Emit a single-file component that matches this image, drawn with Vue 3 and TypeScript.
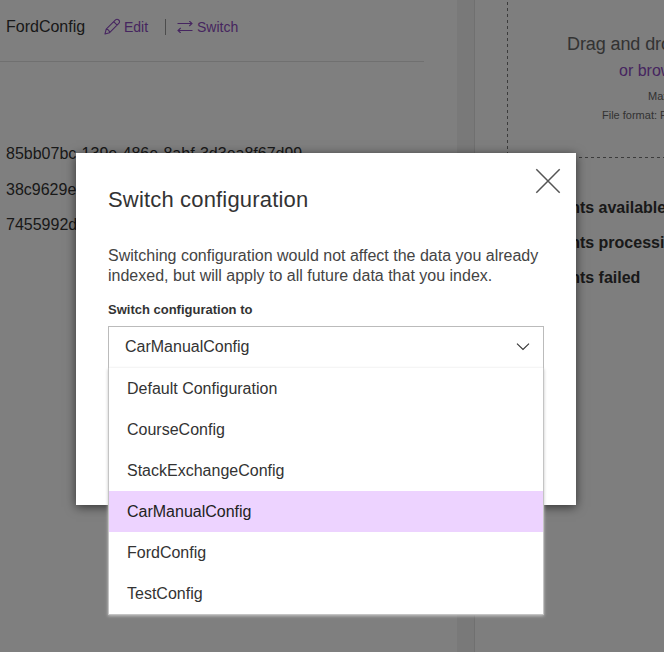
<script setup lang="ts">
import { ref } from 'vue'

const ids: string[] = ['85bb07bc-139e-486e-8abf-3d3ea8f67d99', '38c9629e', '7455992d']
const stats: string[] = ['Documents available', 'Documents processing', 'Documents failed']
const options: string[] = [
  'Default Configuration',
  'CourseConfig',
  'StackExchangeConfig',
  'CarManualConfig',
  'FordConfig',
  'TestConfig',
]
const selected = ref<string>('CarManualConfig')
</script>

<template>
  <div class="screen">
    <div class="page">
      <main class="left">
        <header class="head">
          <span class="name">FordConfig</span>
          <a class="action edit">
            <svg width="17" height="17" viewBox="0 0 17 17" fill="none" stroke="currentColor" stroke-width="1.1" stroke-linejoin="round">
              <path d="M1 16L2.2 11.2L11.5 1.9Q13 .5 14.7 2Q16.4 3.8 14.8 5.3L5.6 14.7ZM2.2 11.2Q5.2 11.4 5.6 14.7M9.7 3.7L13.1 7.1" />
            </svg>
            Edit
          </a>
          <span class="bar"></span>
          <a class="action switch">
            <svg width="16" height="12" viewBox="0 0 16 12" fill="none" stroke="currentColor" stroke-width="1.1">
              <path d="M.5 2.5H15M12.3 0L15 2.5L12.3 5M15.5 9.5H1M3.7 7L1 9.5L3.7 12" />
            </svg>
            Switch
          </a>
        </header>
        <ul class="ids">
          <li v-for="id in ids" :key="id">{{ id }}</li>
        </ul>
      </main>
      <aside class="right">
        <div class="drop">
          <p class="drag">Drag and drop</p>
          <p class="browse">or browse</p>
          <p class="small max">Max</p>
          <p class="small format">File format: PDF</p>
        </div>
        <ul class="stats">
          <li v-for="s in stats" :key="s">{{ s }}</li>
        </ul>
      </aside>
    </div>

    <div class="overlay">
      <section class="modal">
        <svg class="close" width="26" height="26" viewBox="0 0 26 26" fill="none" stroke="#555" stroke-width="1.5">
          <path d="M1.3 1.3L24.7 24.7M24.7 1.3L1.3 24.7" />
        </svg>
        <h2>Switch configuration</h2>
        <p class="text">
          Switching configuration would not affect the data you already<br />indexed, but will apply to all future data that you index.
        </p>
        <label>Switch configuration to</label>
        <div class="select">
          <span>{{ selected }}</span>
          <svg width="14" height="8" viewBox="0 0 14 8" fill="none" stroke="#333" stroke-width="1.1">
            <path d="M1 .7L7 6.5L13 .7" />
          </svg>
          <ul class="menu">
            <li v-for="o in options" :key="o" :class="{ active: o === selected }" @click="selected = o">{{ o }}</li>
          </ul>
        </div>
      </section>
    </div>
  </div>
</template>

<style>
body {
  margin: 0;
  overflow: hidden;
}
</style>

<style scoped>
* {
  box-sizing: border-box;
}
p,
ul,
h2 {
  margin: 0;
  padding: 0;
  list-style: none;
}
.screen {
  position: relative;
  width: 664px;
  height: 652px;
  overflow: hidden;
  font-family: 'Liberation Sans', Arial, sans-serif;
  font-size: 16px;
  color: #333;
}
.page {
  display: flex;
  height: 100%;
  gap: 17px;
  background: #f2f2f2;
}
.left {
  width: 457px;
  flex: none;
  background: #fff;
}
.head {
  display: flex;
  align-items: center;
  width: 424px;
  height: 62px;
  padding: 0 0 8px 6px;
  border-bottom: 1px solid #e0e0e0;
}
.name {
  width: 98px;
}
.action {
  display: flex;
  align-items: center;
  gap: 3px;
  font-size: 14px;
  color: #8d4bc0;
}
.edit {
  width: 61px;
}
.switch {
  gap: 4px;
}
.bar {
  width: 1px;
  height: 16px;
  margin-right: 11px;
  background: #999;
}
.ids {
  padding: 74px 0 0 6px;
}
.ids li {
  height: 35.5px;
  line-height: 35px;
}
.right {
  flex: none;
  width: 190px;
  border-left: 1px solid #e0e0e0;
  background: #fcfcfc;
  overflow: hidden;
  white-space: nowrap;
}
.drop {
  height: 158px;
  margin-left: 32px;
  padding: 31px 0 0 1px;
  background:
    repeating-linear-gradient(to bottom, transparent 0 2px, #777 2px 5px, transparent 5px 6px) left top / 1px 100% no-repeat,
    repeating-linear-gradient(to right, #777 0 3px, transparent 3px 6px) left bottom / 100% 1px no-repeat;
}
.drag {
  padding-left: 59px;
  font-size: 18px;
  line-height: 26px;
  letter-spacing: -0.1px;
  color: #666;
}
.browse {
  padding-left: 111px;
  line-height: 27px;
  color: #8d4bc0;
}
.small {
  font-size: 11px;
  line-height: 19px;
  color: #666;
}
.max {
  padding: 3px 0 0 140px;
}
.format {
  padding-left: 94px;
}
.stats {
  padding: 32px 0 0 32px;
  font-weight: bold;
}
.stats li {
  height: 35px;
  line-height: 35px;
}
.overlay {
  position: absolute;
  inset: 0;
  padding: 153px 0 0 76px;
  background: rgba(0, 0, 0, 0.5);
}
.modal {
  position: relative;
  width: 500px;
  height: 352px;
  padding: 32px;
  background: #fff;
  box-shadow: 0 2px 10px rgba(0, 0, 0, 0.6);
}
.close {
  position: absolute;
  top: 15px;
  right: 15px;
}
h2 {
  font-size: 22px;
  font-weight: normal;
  line-height: 30px;
  letter-spacing: 0.17px;
}
.text {
  margin-top: 31px;
  line-height: 20px;
  white-space: nowrap;
  color: #444;
}
label {
  display: block;
  margin-top: 14px;
  font-size: 13px;
  font-weight: bold;
  line-height: 20px;
}
.select {
  position: relative;
  display: flex;
  align-items: center;
  justify-content: space-between;
  width: 436px;
  height: 42px;
  margin-top: 6px;
  padding: 0 13px 1px 16px;
  border: 1px solid #bbb;
  border-bottom: 0;
}
.menu {
  position: absolute;
  top: 41px;
  left: -1px;
  width: 436px;
  border: 1px solid #c4c4c4;
  border-top: 0;
  background: #fff;
  box-shadow: 0 1px 3px #c4c4c4;
}
.menu li {
  height: 41px;
  padding-left: 18px;
  line-height: 41px;
}
.menu .active {
  background: #edd3ff;
  color: #222;
}
</style>
